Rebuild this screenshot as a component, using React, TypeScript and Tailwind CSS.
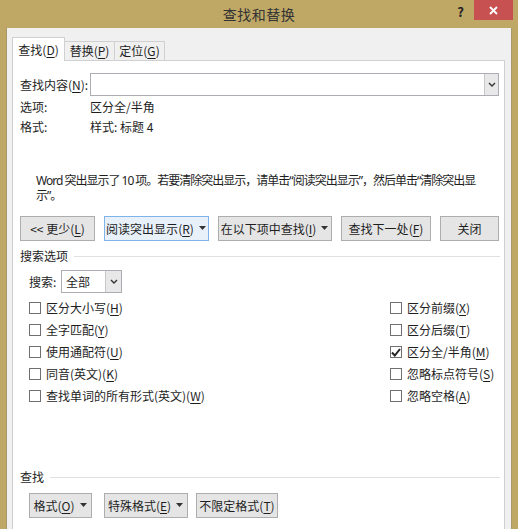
import React, { ReactNode } from 'react';

/** Accelerator key label: text + (underlined key) */
function Acc({ label, k }: { label: string; k: string }) {
  return (
    <>
      {label}(<span className="underline underline-offset-2">{k}</span>)
    </>
  );
}

function Caret() {
  return (
    <svg width="8" height="5" viewBox="0 0 8 5" className="ml-[5px]">
      <path d="M0 0 H7 L3.5 4 Z" fill="#333" />
    </svg>
  );
}

function Chevron() {
  return (
    <svg width="8" height="6" viewBox="0 0 8 6">
      <path d="M1 1 L4 4 L7 1" stroke="#333" strokeWidth="1.4" fill="none" />
    </svg>
  );
}

function Btn({
  children,
  w,
  active = false,
}: {
  children: ReactNode;
  w: string;
  active?: boolean;
}) {
  return (
    <div
      className={`h-[25px] flex items-center justify-center border ${w} ${
        active ? 'border-[#7eb4ea] bg-[#e8f1fa]' : 'border-[#adadad] bg-[#e5e5e5]'
      }`}
    >
      {children}
    </div>
  );
}

function Check({ children, checked = false }: { children: ReactNode; checked?: boolean }) {
  return (
    <div className="h-[22px] flex items-center gap-[5px]">
      <div className="w-[12px] h-[12px] border border-[#707070] bg-white flex items-center justify-center">
        {checked && (
          <svg width="10" height="9" viewBox="0 0 10 9">
            <path d="M1 4.5 L3.8 7.5 L9 1" stroke="#222" strokeWidth="2" fill="none" />
          </svg>
        )}
      </div>
      <span>{children}</span>
    </div>
  );
}

export default function App() {
  return (
    <div className="w-[518px] h-[529px] bg-[#bfa866] flex flex-col overflow-hidden text-[12px] leading-[16px] text-[#1e1e1e] font-['Microsoft_YaHei','Noto_Sans_CJK_SC',sans-serif]">
      {/* Title bar */}
      <div className="h-[28px] grid grid-cols-[1fr_auto_1fr] shrink-0">
        <div />
        <div className="pt-[5px] text-[14px] leading-[18px] tracking-[0.5px] text-[#333]">查找和替换</div>
        <div className="flex justify-end items-start pr-[5px]">
          <span className="mt-[4px] mr-[10px] text-[13px] font-bold text-[#222]">?</span>
          <div className="w-[39px] h-[20px] bg-[#c75050] flex items-center justify-center">
            <svg width="9" height="9" viewBox="0 0 9 9">
              <path d="M1 1 L8 8 M8 1 L1 8" stroke="#fff" strokeWidth="1.8" />
            </svg>
          </div>
        </div>
      </div>

      {/* Dialog body */}
      <div className="flex-1 mx-[6px] bg-[#f0f0f0] border-l border-r border-[#a8986a] flex flex-col pl-[5px] pr-[6px]">
        {/* Tabs */}
        <div className="flex items-end mt-[9px] h-[24px] relative z-10">
          <div className="h-[24px] w-[53px] bg-white border border-b-0 border-[#d0d0d0] flex items-center justify-center">
            <Acc label="查找" k="D" />
          </div>
          <div className="h-[20px] w-[50px] bg-[#f0f0f0] border border-l-0 border-[#d0d0d0] flex items-center justify-center">
            <Acc label="替换" k="P" />
          </div>
          <div className="h-[20px] w-[50px] bg-[#f0f0f0] border border-l-0 border-[#d0d0d0] flex items-center justify-center">
            <Acc label="定位" k="G" />
          </div>
        </div>

        {/* Tab panel */}
        <div className="flex-1 -mt-px bg-white border border-b-0 border-[#d0d0d0] flex flex-col">
          {/* Find what */}
          <div className="flex items-center mt-[12px] pl-[7px] pr-[5px]">
            <div className="w-[70px]">
              查找内容(<span className="underline underline-offset-2">N</span>):
            </div>
            <div className="flex-1 h-[23px] border border-[#abadb3] flex justify-end">
              <div className="w-[14px] h-full bg-[#e8e8e8] border-l border-[#c8c8c8] flex items-center justify-center">
                <Chevron />
              </div>
            </div>
          </div>

          <div className="flex items-center h-[20px] mt-px pl-[7px]">
            <div className="w-[70px]">选项:</div>
            <div>区分全/半角</div>
          </div>
          <div className="flex items-center h-[20px] pl-[7px]">
            <div className="w-[70px]">格式:</div>
            <div>样式: 标题 4</div>
          </div>

          {/* Message */}
          <p className="mt-[36px] pl-[23px] pr-[8px] leading-[15px] tracking-[-1px] font-['Noto_Sans','Noto_Sans_CJK_SC',sans-serif]">
            Word 突出显示了 10 项。若要清除突出显示，请单击“阅读突出显示”，然后单击“清除突出显示”。
          </p>

          {/* Action buttons */}
          <div className="flex gap-[9px] mt-[13px] pl-[7px]">
            <Btn w="w-[75px]">
              &lt;&lt; 更少(<span className="underline underline-offset-2">L</span>)
            </Btn>
            <Btn w="w-[105px]" active>
              <Acc label="阅读突出显示" k="R" />
              <Caret />
            </Btn>
            <Btn w="w-[114px]">
              <Acc label="在以下项中查找" k="I" />
              <Caret />
            </Btn>
            <Btn w="w-[90px]">
              <Acc label="查找下一处" k="F" />
            </Btn>
            <Btn w="w-[59px]">关闭</Btn>
          </div>

          {/* Search options */}
          <div className="flex items-center gap-[6px] mt-[7px] pl-[7px] pr-[4px] h-[16px]">
            <span>搜索选项</span>
            <div className="flex-1 h-px bg-[#e0e0e0]" />
          </div>

          <div className="flex items-center mt-[6px] pl-[16px]">
            <span className="w-[32px]">搜索:</span>
            <div className="w-[61px] h-[23px] border border-[#abadb3] flex">
              <div className="flex-1 pl-[4px] flex items-center">全部</div>
              <div className="w-[16px] h-full bg-[#e8e8e8] border-l border-[#c8c8c8] flex items-center justify-center">
                <Chevron />
              </div>
            </div>
          </div>

          <div className="flex mt-[4px] pl-[16px]">
            <div className="w-[361px] flex flex-col">
              <Check><Acc label="区分大小写" k="H" /></Check>
              <Check><Acc label="全字匹配" k="Y" /></Check>
              <Check><Acc label="使用通配符" k="U" /></Check>
              <Check>同音(英文)(<span className="underline underline-offset-2">K</span>)</Check>
              <Check>查找单词的所有形式(英文)(<span className="underline underline-offset-2">W</span>)</Check>
            </div>
            <div className="flex flex-col">
              <Check><Acc label="区分前缀" k="X" /></Check>
              <Check><Acc label="区分后缀" k="T" /></Check>
              <Check checked><Acc label="区分全/半角" k="M" /></Check>
              <Check><Acc label="忽略标点符号" k="S" /></Check>
              <Check><Acc label="忽略空格" k="A" /></Check>
            </div>
          </div>

          {/* Find format */}
          <div className="flex items-center gap-[6px] mt-[62px] pl-[7px] pr-[4px] h-[16px]">
            <span>查找</span>
            <div className="flex-1 h-px bg-[#e0e0e0]" />
          </div>

          <div className="flex mt-[8px] pl-[16px]">
            <Btn w="w-[63px]">
              <Acc label="格式" k="O" />
              <Caret />
            </Btn>
            <div className="ml-[12px]">
              <Btn w="w-[84px]">
                <Acc label="特殊格式" k="E" />
                <Caret />
              </Btn>
            </div>
            <div className="ml-[8px]">
              <Btn w="w-[82px]">
                <Acc label="不限定格式" k="T" />
              </Btn>
            </div>
          </div>
        </div>
      </div>
    </div>
  );
}
